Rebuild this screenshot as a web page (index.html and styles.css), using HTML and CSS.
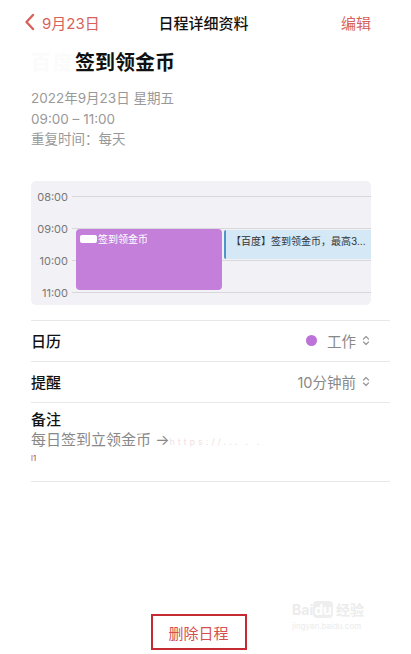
FILE: index.html
```html
<!DOCTYPE html>
<html lang="zh-CN">
<head>
    <meta charset="UTF-8">
    <meta name="viewport" content="width=device-width, initial-scale=1.0">
    <title>日程详细资料</title>
    <link rel="stylesheet" href="styles.css">
</head>
<body>

    <div class="page">
        <!-- Top bar -->
        <div class="topbar">
            <a class="back">
                <svg width="11" height="18" viewBox="0 0 11 18"><path d="M9 2 L2.5 9 L9 16" fill="none" stroke="#d7625b" stroke-width="2.4" stroke-linecap="round" stroke-linejoin="round"/></svg>
                <span>9月23日</span>
            </a>
            <div class="title">日程详细资料</div>
            <a class="edit">编辑</a>
        </div>

        <!-- Event header -->
        <div class="event">
            <h1><span class="blur">百度</span>签到领金币</h1>
            <p>2022年9月23日 星期五</p>
            <p>09:00 – 11:00</p>
            <p>重复时间：每天</p>
        </div>

        <!-- Day preview -->
        <div class="day">
            <div class="hour"><span>08:00</span><i></i></div>
            <div class="hour"><span>09:00</span><i></i></div>
            <div class="hour"><span>10:00</span><i></i></div>
            <div class="hour"><span>11:00</span><i></i></div>
            <div class="ev ev-main"><b class="blob"></b>签到领金币</div>
            <div class="ev ev-other">【百度】签到领金币，最高3...</div>
        </div>

        <!-- Detail rows -->
        <div class="rows">
            <div class="row">
                <span class="label">日历</span>
                <span class="value"><b class="dot"></b>工作<svg class="updown" width="8" height="11" viewBox="0 0 8 11"><path d="M1.5 4 L4 1.5 L6.5 4 M1.5 7 L4 9.5 L6.5 7" fill="none" stroke="#999" stroke-width="1.2" stroke-linecap="round" stroke-linejoin="round"/></svg></span>
            </div>
            <div class="row">
                <span class="label">提醒</span>
                <span class="value">10分钟前<svg class="updown" width="8" height="11" viewBox="0 0 8 11"><path d="M1.5 4 L4 1.5 L6.5 4 M1.5 7 L4 9.5 L6.5 7" fill="none" stroke="#999" stroke-width="1.2" stroke-linecap="round" stroke-linejoin="round"/></svg></span>
            </div>
            <div class="row notes">
                <span class="label">备注</span>
                <p>每日签到立领金币 →<span class="link">https://...  .  .</span></p>
                <p class="small">l1</p>
            </div>
        </div>

        <div class="bottom">
            <a class="delete">删除日程</a>
            <div class="mark">Bai<span>du</span> 经验<small>jingyan.baidu.com</small></div>
        </div>
    </div>

</body>
</html>
```

FILE: styles.css
```css
body {
    margin: 0;
    padding: 0;
    background: #fff;
    font-family: Inter, "Noto Sans CJK SC", "Noto Sans", sans-serif;
    color: #111;
}
.page {
    width: 411px;
    height: 654px;
    display: flex;
    flex-direction: column;
}
.topbar {
    height: 44px;
    display: flex;
    align-items: center;
    justify-content: space-between;
    padding: 0 40px 0 24px;
    font-size: 15px;
}
.back {
    display: flex;
    align-items: center;
    gap: 7px;
    color: #d7625b;
    width: 100px;
}
.title {
    font-weight: 500;
    color: #111;
    margin-left: 12px;
}
.edit {
    color: #d7625b;
    width: 100px;
    text-align: right;
}
.event {
    padding: 0 31px;
}
.event h1 {
    font-size: 20px;
    font-weight: 700;
    margin: 4px 0 10px;
    line-height: 30px;
}
.event .blur {
    color: #fbfbfb;
    letter-spacing: 2px;
}
.event p {
    margin: 0;
    font-size: 13.5px;
    line-height: 20.5px;
    color: #999;
}
.day {
    position: relative;
    margin: 31px 40px 0 31px;
    height: 124px;
    background: #f2f2f6;
    border-radius: 5px;
}
.hour {
    height: 32px;
    display: flex;
    align-items: center;
    gap: 4px;
}
.hour span {
    width: 37px;
    text-align: right;
    font-size: 11px;
    color: #777;
}
.hour i {
    flex: 1;
    height: 1px;
    background: #d8d8dc;
}
.ev {
    position: absolute;
    font-size: 10px;
    border-radius: 4px;
    box-sizing: border-box;
}
.ev-main {
    left: 45px;
    top: 48px;
    width: 146px;
    height: 61px;
    background: #c47fda;
    color: #fff;
    padding: 2px 4px;
    display: flex;
    align-items: flex-start;
}
.blob {
    display: inline-block;
    width: 17px;
    height: 8px;
    background: #fff;
    border-radius: 2px;
    margin: 4px 1px 0 0;
}
.ev-other {
    left: 193px;
    top: 49px;
    right: 0;
    height: 29px;
    background: #d5e8f5;
    border-left: 2px solid #4f95c9;
    border-radius: 2px 0 0 2px;
    color: #333;
    padding: 3px 5px;
}
.rows {
    margin: 15px 21px 0 31px;
    border-top: 1px solid #e8e8e8;
}
.row {
    display: flex;
    justify-content: space-between;
    align-items: center;
    height: 40px;
    border-bottom: 1px solid #e8e8e8;
    padding-right: 20px;
    font-size: 15px;
}
.label {
    font-weight: 500;
}
.value {
    display: flex;
    align-items: center;
    color: #888;
    font-size: 14.5px;
}
.dot {
    width: 11px;
    height: 11px;
    border-radius: 50%;
    background: #bc72d8;
    margin-right: 10px;
}
.updown {
    margin-left: 6px;
}
.notes {
    height: 79px;
    flex-direction: column;
    align-items: flex-start;
    justify-content: flex-start;
    padding-top: 5px;
    box-sizing: border-box;
}
.notes p {
    margin: 0;
    font-size: 15px;
    line-height: 22px;
    color: #888;
}
.link {
    color: #f2e2e2;
    font-size: 9px;
    letter-spacing: 3px;
}
.notes .small {
    font-size: 8px;
    line-height: 10px;
    color: #b04a40;
}
.bottom {
    margin-top: auto;
    height: 40px;
    display: flex;
    align-items: flex-start;
    justify-content: center;
    position: relative;
}
.delete {
    border: 2px solid #c52b30;
    width: 96px;
    height: 36px;
    box-sizing: border-box;
    display: flex;
    align-items: center;
    justify-content: center;
    color: #d2514e;
    font-size: 15px;
    margin-left: -14px;
}
.mark {
    position: absolute;
    left: 292px;
    top: -12px;
    font-size: 14px;
    font-weight: 700;
    color: #ececec;
    line-height: 16px;
}
.mark span {
    background: #eee;
    color: #fff;
    border-radius: 4px;
    padding: 0 1px;
}
.mark small {
    display: block;
    font-size: 8px;
    font-weight: 400;
}
```
